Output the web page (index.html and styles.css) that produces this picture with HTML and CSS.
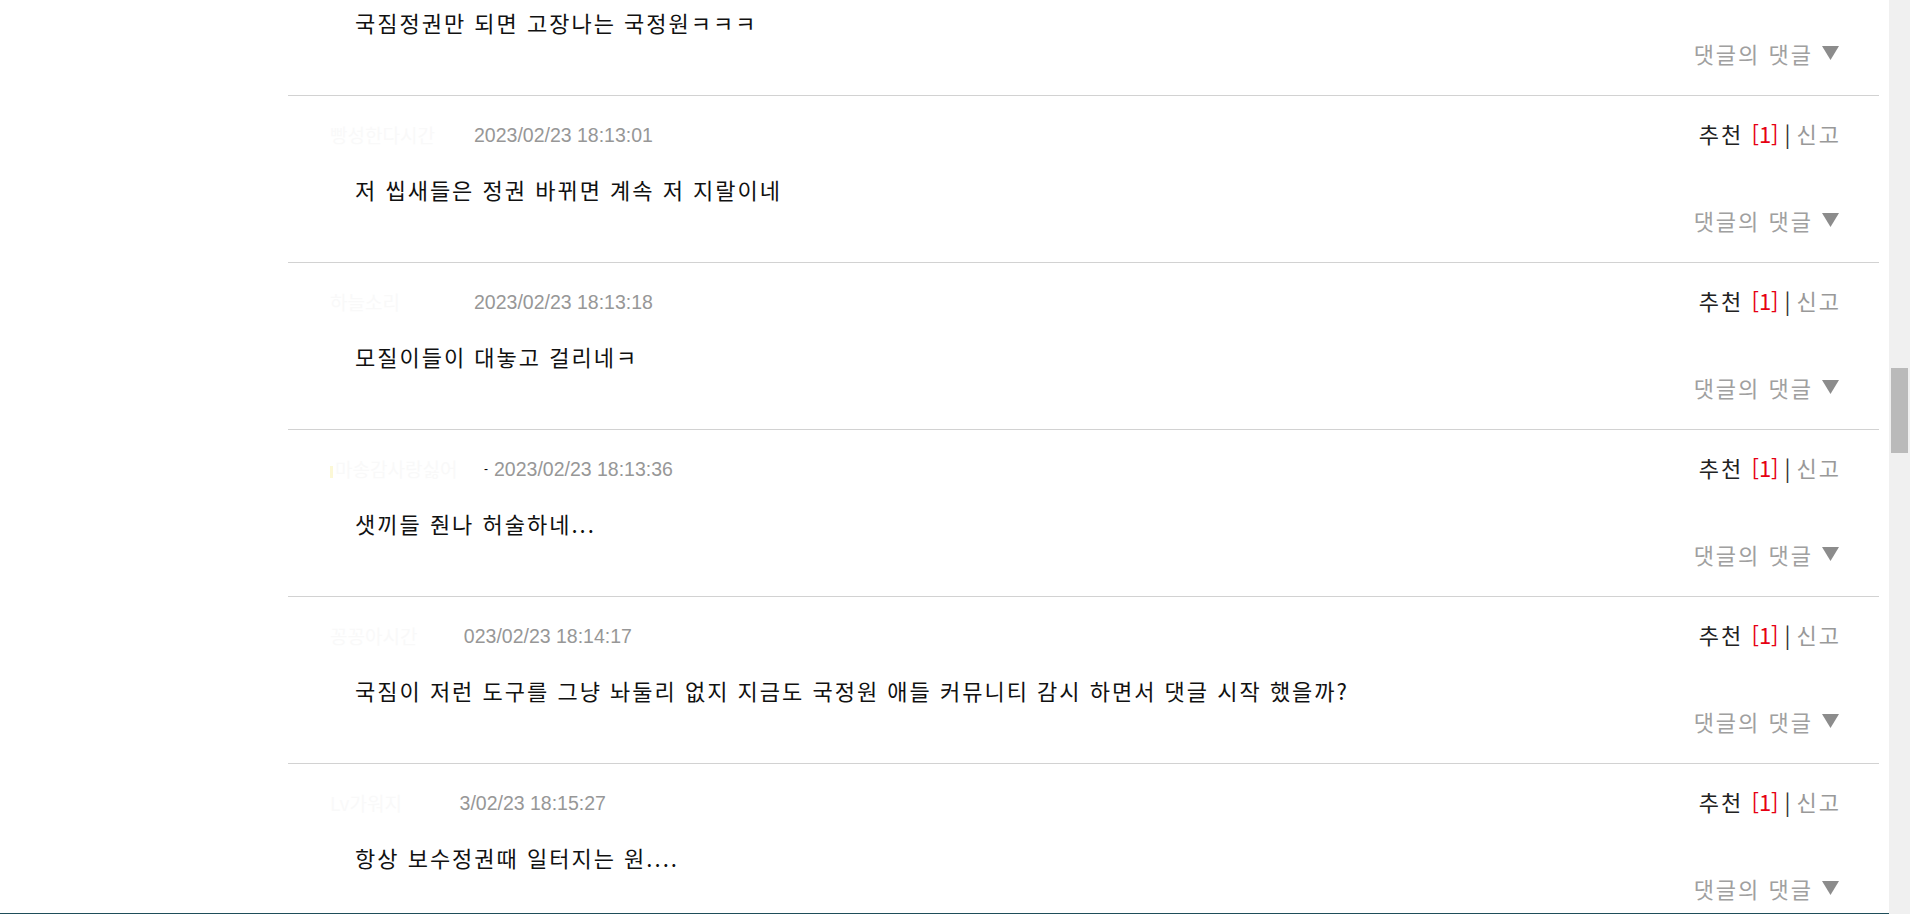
FILE: index.html
```html
<!DOCTYPE html>
<html lang="ko">
<head>
<meta charset="utf-8">
<title>댓글</title>
<link rel="stylesheet" href="styles.css">
</head>
<body>
<div class="page">
  <main class="board">
    <ul class="comments">
      <li class="comment">
        <div class="meta">
          <span class="nick nick--a">정치는개판</span>
          <span class="date">2023/02/23 18:12:48</span>
          <span class="vote"><span class="vote-label">추천</span> <span class="vote-count">[1]</span><span class="vote-sep">|</span><span class="report">신고</span></span>
        </div>
        <p class="text">국짐정권만 되면 고장나는 국정원ㅋㅋㅋ</p>
        <div class="reply">댓글의 댓글 <svg class="tri" width="17" height="14" viewBox="0 0 17 14"><polygon points="0,0 17,0 8.5,14"/></svg></div>
      </li>
      <li class="comment">
        <div class="meta">
          <span class="nick nick--a">빵성한다시간</span>
          <span class="date">2023/02/23 18:13:01</span>
          <span class="vote"><span class="vote-label">추천</span> <span class="vote-count">[1]</span><span class="vote-sep">|</span><span class="report">신고</span></span>
        </div>
        <p class="text">저 씹새들은 정권 바뀌면 계속 저 지랄이네</p>
        <div class="reply">댓글의 댓글 <svg class="tri" width="17" height="14" viewBox="0 0 17 14"><polygon points="0,0 17,0 8.5,14"/></svg></div>
      </li>
      <li class="comment">
        <div class="meta">
          <span class="nick nick--a">하늘소리</span>
          <span class="date">2023/02/23 18:13:18</span>
          <span class="vote"><span class="vote-label">추천</span> <span class="vote-count">[1]</span><span class="vote-sep">|</span><span class="report">신고</span></span>
        </div>
        <p class="text">모질이들이 대놓고 걸리네ㅋ</p>
        <div class="reply">댓글의 댓글 <svg class="tri" width="17" height="14" viewBox="0 0 17 14"><polygon points="0,0 17,0 8.5,14"/></svg></div>
      </li>
      <li class="comment">
        <div class="meta">
          <span class="nick nick--b"><span class="lv"></span>마송감사랑싫어</span>
          <span class="dash">-</span>
          <span class="date">2023/02/23 18:13:36</span>
          <span class="vote"><span class="vote-label">추천</span> <span class="vote-count">[1]</span><span class="vote-sep">|</span><span class="report">신고</span></span>
        </div>
        <p class="text">샛끼들 줜나 허술하네...</p>
        <div class="reply">댓글의 댓글 <svg class="tri" width="17" height="14" viewBox="0 0 17 14"><polygon points="0,0 17,0 8.5,14"/></svg></div>
      </li>
      <li class="comment">
        <div class="meta">
          <span class="nick nick--c">꽁꽁아시간</span>
          <span class="date date--c">2023/02/23 18:14:17</span>
          <span class="vote"><span class="vote-label">추천</span> <span class="vote-count">[1]</span><span class="vote-sep">|</span><span class="report">신고</span></span>
        </div>
        <p class="text">국짐이 저런 도구를 그냥 놔둘리 없지 지금도 국정원 애들 커뮤니티 감시 하면서 댓글 시작 했을까?</p>
        <div class="reply">댓글의 댓글 <svg class="tri" width="17" height="14" viewBox="0 0 17 14"><polygon points="0,0 17,0 8.5,14"/></svg></div>
      </li>
      <li class="comment">
        <div class="meta">
          <span class="nick nick--d">Lv가워지</span>
          <span class="date date--d">2023/02/23 18:15:27</span>
          <span class="vote"><span class="vote-label">추천</span> <span class="vote-count">[1]</span><span class="vote-sep">|</span><span class="report">신고</span></span>
        </div>
        <p class="text">항상 보수정권때 일터지는 원....</p>
        <div class="reply">댓글의 댓글 <svg class="tri" width="17" height="14" viewBox="0 0 17 14"><polygon points="0,0 17,0 8.5,14"/></svg></div>
      </li>
    </ul>
  </main>
  <div class="scrollbar"><div class="thumb"></div></div>
</div>
</body>
</html>
```

FILE: styles.css
```css
html, body {
  margin: 0;
  padding: 0;
  height: 100%;
  overflow: hidden;
  background: #fff;
}

body {
  font-family: "Noto Sans CJK KR", "Noto Sans", sans-serif;
  color: #111;
}

.page {
  display: flex;
  height: 914px;
}

.board {
  flex: 1;
  height: 914px;
  box-sizing: border-box;
  padding: 0 10px 0 288px;
  border-bottom: 1px solid #1f4e5a;
  overflow: hidden;
}

.comments {
  list-style: none;
  margin: -71px 0 0;
  padding: 0;
}

.comment {
  border-bottom: 1px solid #d2d2d2;
  padding: 27px 40px 30px 0;
}

.meta {
  display: flex;
  align-items: center;
  height: 24px;
  padding-left: 42px;
}

.nick {
  position: relative;
  z-index: 1;
  display: inline-block;
  background: #fff;
  color: #f9f9f9;
  font-size: 19px;
  line-height: 24px;
  white-space: nowrap;
  overflow: hidden;
}

.nick--a { width: 144px; }
.nick--b { width: 152px; }
.nick--c { width: 134px; }
.nick--d { width: 129px; }

.lv {
  display: inline-block;
  width: 3px;
  height: 12px;
  background: #fcf8d6;
  margin-right: 2px;
  vertical-align: middle;
}

.dash {
  font-family: "Liberation Sans", sans-serif;
  font-size: 12px;
  color: #000;
  margin: 0 6px 0 2px;
}

.date {
  font-family: "Liberation Sans", Arial, sans-serif;
  font-size: 19.5px;
  color: #979797;
  line-height: 24px;
  white-space: nowrap;
}

.date--c { margin-left: -11px; }
.date--d { margin-left: -32px; }

.vote {
  margin-left: auto;
  margin-top: -4px;
  font-size: 22px;
  letter-spacing: 2px;
  line-height: 24px;
  white-space: nowrap;
  margin-right: -2px;
}

.vote-label { color: #222; }
.vote-count { color: #e60012; letter-spacing: 0; }
.vote-sep { color: #333; letter-spacing: 0; margin: 0 6px; }
.report { color: #999; }

.text {
  margin: 27px 0 0 67px;
  font-size: 22px;
  letter-spacing: 2px;
  line-height: 30px;
  color: #111;
  white-space: nowrap;
}

.reply {
  margin-top: 4px;
  height: 24px;
  display: flex;
  justify-content: flex-end;
  align-items: center;
  gap: 9px;
  font-size: 22px;
  letter-spacing: 2px;
  color: #a0a0a0;
  white-space: nowrap;
}

.tri {
  fill: #8c8c8c;
  display: block;
}

.scrollbar {
  width: 21px;
  height: 914px;
  background: #f0f0f0;
  padding: 368px 2px 0 2px;
  box-sizing: border-box;
}

.thumb {
  height: 85px;
  background: #bababa;
}
```
